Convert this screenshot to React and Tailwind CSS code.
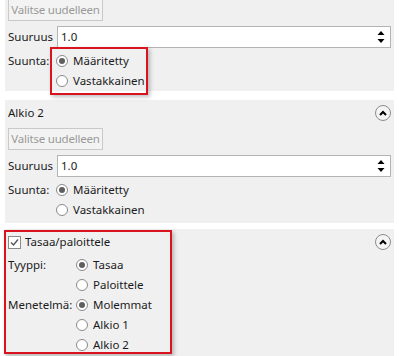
import React from 'react';

const font = { fontFamily: '"Noto Sans", "Segoe UI", sans-serif' };

const Radio = ({ checked, label }) => (
  <div className="flex h-5 items-center gap-[5px]">
    <span className="flex h-3 w-3 items-center justify-center rounded-full border border-[#8a8a8a] bg-white">
      {checked && <span className="h-[6px] w-[6px] rounded-full bg-[#5f5f5f]" />}
    </span>
    <span>{label}</span>
  </div>
);

const Collapse = () => (
  <span className="flex h-4 w-4 items-center justify-center rounded-full border border-[#8c8c8c] bg-[#f4f4f4]">
    <svg width="8" height="6" viewBox="0 0 8 6">
      <path d="M1 5 L4 2 L7 5" stroke="#000" strokeWidth="2" fill="none" />
    </svg>
  </span>
);

const Spinner = () => (
  <svg width="8" height="14" viewBox="0 0 8 14" className="mr-[5px]">
    <path d="M0.5 5 L4 1 L7.5 5 Z" fill="#000" />
    <path d="M0.5 9 L4 13 L7.5 9 Z" fill="#000" />
  </svg>
);

const Button = () => (
  <div className="flex h-[22px] w-[95px] items-center justify-center whitespace-nowrap border border-[#c9c9c9] bg-[#f3f3f3] tracking-[-0.2px] text-[#9a9a9a]">
    Valitse uudelleen
  </div>
);

const SizeRow = () => (
  <div className="flex h-[22px] items-center">
    <span className="w-[49px]">Suuruus</span>
    <div className="flex h-[22px] flex-1 items-center justify-between border border-[#b4b4b4] bg-white pl-[3px]">
      <span>1.0</span>
      <Spinner />
    </div>
  </div>
);

const Direction = () => (
  <div className="flex">
    <span className="flex h-5 w-[48px] items-center">Suunta:</span>
    <div className="flex flex-col">
      <Radio checked label="Määritetty" />
      <Radio label="Vastakkainen" />
    </div>
  </div>
);

export default function App() {
  return (
    <div className="relative h-[356px] w-[399px] overflow-hidden bg-white text-[11.5px] text-[#1b1b1b]" style={font}>
      {/* Panel 1 */}
      <div className="ml-[5px] flex h-[91px] w-[389px] flex-col bg-[#f0f0f0] pl-[3px] pr-[3px] pt-0">
        <div className="-mt-px">
          <Button />
        </div>
        <div className="mt-[5px]">
          <SizeRow />
        </div>
        <div className="mt-[3px]">
          <Direction />
        </div>
      </div>

      <div className="h-[9px]" />

      {/* Panel 2 */}
      <div className="ml-[5px] flex h-[123px] w-[389px] flex-col bg-[#f0f0f0] pl-[3px] pr-[3px]">
        <div className="flex h-[26px] items-center justify-between">
          <span>Alkio 2</span>
          <Collapse />
        </div>
        <div className="mt-[2px]">
          <Button />
        </div>
        <div className="mt-[5px]">
          <SizeRow />
        </div>
        <div className="mt-[3px]">
          <Direction />
        </div>
      </div>

      <div className="h-[6px]" />

      {/* Panel 3 */}
      <div className="ml-[5px] flex h-[127px] w-[389px] flex-col bg-[#f0f0f0] pl-[3px] pr-[3px]">
        <div className="flex h-[26px] items-center justify-between">
          <div className="flex items-center gap-[4px]">
            <span className="flex h-[13px] w-[13px] items-center justify-center border border-[#8a8a8a] bg-white">
              <svg width="9" height="9" viewBox="0 0 9 9">
                <path d="M1 4.5 L3.5 7 L8 1.5" stroke="#555" strokeWidth="1.4" fill="none" />
              </svg>
            </span>
            <span>Tasaa/paloittele</span>
          </div>
          <Collapse />
        </div>
        <div className="flex">
          <div className="flex w-[68px] flex-col">
            <span className="flex h-5 items-center">Tyyppi:</span>
            <span className="h-5" />
            <span className="flex h-5 items-center">Menetelmä:</span>
          </div>
          <div className="flex flex-col">
            <Radio checked label="Tasaa" />
            <Radio label="Paloittele" />
            <Radio checked label="Molemmat" />
            <Radio label="Alkio 1" />
            <Radio label="Alkio 2" />
          </div>
        </div>
      </div>

      {/* Highlight annotations */}
      <div className="absolute left-[50px] top-[47px] h-[48px] w-[98px] border-2 border-[#d9141e] shadow-[2px_2px_4px_rgba(0,0,0,0.25)]" />
      <div className="absolute left-[4px] top-[230px] h-[124px] w-[168px] border-2 border-[#d9141e] shadow-[2px_2px_4px_rgba(0,0,0,0.25)]" />
    </div>
  );
}
